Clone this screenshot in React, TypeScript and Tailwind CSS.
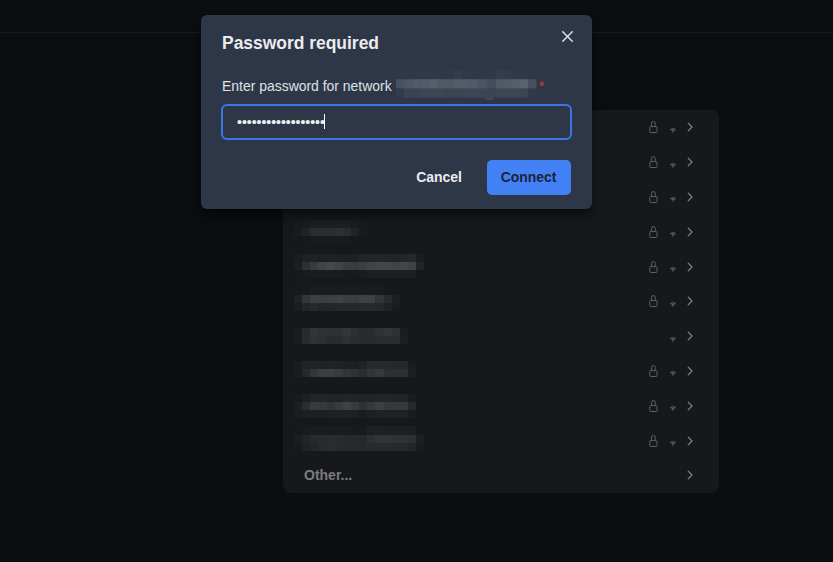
import React from "react";

const CELL = 8.15;

type MosaicProps = { rows: number[][]; tint?: string };

// Redacted text: a grid of square cells; each number is the cell's strength in percent.
function Mosaic({ rows, tint = "bg-[#ffffff]" }: MosaicProps) {
  return (
    <div className="flex flex-col">
      {rows.map((r, i) => (
        <div key={i} className="flex">
          {r.map((v, j) => (
            <div key={j} style={{ width: CELL, height: CELL, opacity: v / 100 }} className={tint} />
          ))}
        </div>
      ))}
    </div>
  );
}

type Network = { pad: string; locked: boolean; rows: number[][] };

const networks: Network[] = [
  { pad: "pt-0", locked: true, rows: [] },
  { pad: "pt-0", locked: true, rows: [] },
  { pad: "pt-0", locked: true, rows: [] },
  {
    pad: "pt-[5.5px]",
    locked: true,
    rows: [
      [1, 2, 3, 3, 3, 3, 3, 2, 1],
      [2, 5, 9, 9, 9, 10, 9, 5, 1],
      [0, 0, 1, 1, 1, 1, 1, 0, 0],
    ],
  },
  {
    pad: "pt-[4.7px]",
    locked: true,
    rows: [
      [2, 4, 4, 3, 4, 3, 3, 3, 5, 6, 6, 5, 5, 6, 7, 2],
      [3, 10, 15, 19, 21, 19, 16, 15, 17, 19, 20, 20, 19, 20, 18, 5],
      [0, 1, 2, 2, 2, 2, 1, 1, 2, 3, 3, 3, 3, 3, 3, 0],
    ],
  },
  {
    pad: "pt-[3px]",
    locked: true,
    rows: [
      [0, 1, 2, 2, 2, 2, 2, 2, 2, 2, 2, 0, 0],
      [4, 12, 17, 17, 17, 18, 16, 16, 18, 18, 12, 8, 3],
      [2, 6, 7, 6, 6, 7, 7, 7, 7, 8, 7, 4, 2],
    ],
  },
  {
    pad: "pt-[9.2px]",
    locked: false,
    rows: [
      [2, 8, 12, 11, 10, 11, 13, 10, 8, 9, 11, 12, 10, 2],
      [2, 8, 11, 10, 8, 9, 11, 9, 8, 8, 9, 9, 9, 3],
    ],
  },
  {
    pad: "pt-[7.4px]",
    locked: true,
    rows: [
      [2, 5, 5, 4, 5, 4, 3, 3, 5, 8, 8, 8, 7, 7, 2],
      [2, 7, 13, 16, 17, 15, 13, 11, 9, 12, 14, 10, 10, 10, 3],
    ],
  },
  {
    pad: "pt-[5.6px]",
    locked: true,
    rows: [
      [1, 3, 6, 6, 5, 5, 6, 5, 5, 5, 6, 6, 5, 5, 2],
      [3, 9, 15, 14, 12, 15, 18, 15, 11, 14, 17, 14, 14, 14, 7],
      [2, 3, 3, 3, 3, 4, 4, 3, 2, 3, 4, 4, 4, 4, 2],
    ],
  },
  {
    pad: "pt-[3.3px]",
    locked: true,
    rows: [
      [0, 1, 2, 2, 2, 2, 2, 1, 1, 3, 4, 3, 3, 3, 3, 0],
      [2, 5, 8, 8, 9, 8, 7, 7, 7, 10, 12, 12, 11, 11, 10, 3],
      [1, 4, 6, 8, 9, 8, 7, 7, 7, 8, 8, 8, 7, 7, 6, 2],
    ],
  },
];

const ssid = [
  [1, 2, 1, 1, 2, 1, 2, 4, 2, 2, 2, 1, 4, 3, 2, 1, 0],
  [15, 19, 21, 22, 24, 20, 20, 22, 22, 21, 18, 13, 20, 21, 23, 25, 15],
  [3, 8, 8, 9, 9, 9, 8, 8, 9, 9, 9, 8, 9, 9, 9, 8, 2],
];

function Lock() {
  return (
    <svg width="9" height="12" viewBox="0 0 9 12" fill="none" stroke="#66676a" strokeWidth="0.9">
      <rect x="0.8" y="5.6" width="7.2" height="5.9" rx="0.9" />
      <path d="M2.6 5.5V2.2Q2.6 0.5 4.4 0.5Q6.2 0.5 6.2 2.2V5.5" />
    </svg>
  );
}

function Wifi() {
  return (
    <svg width="6" height="5" viewBox="0 0 6 5" fill="none" stroke="#77787a" strokeWidth="0.9">
      <path d="M0.3 1.5Q3 -0.1 5.7 1.5" />
      <path d="M1.5 2.7Q3 1.8 4.5 2.7" />
      <circle cx="3" cy="3.9" r="0.7" fill="#77787a" stroke="none" />
    </svg>
  );
}

function Chevron() {
  return (
    <svg width="6" height="10" viewBox="0 0 6 10" fill="none" stroke="#808183" strokeWidth="1.3">
      <path d="M0.9 0.9L5 5L0.9 9.1" />
    </svg>
  );
}

export default function App() {
  return (
    <div className="relative h-[562px] w-[833px] overflow-hidden bg-[#0b0d11] font-['Liberation_Sans',sans-serif]">
      <header className="h-[33px] border-b border-[#181a1e]" />
      <main className="pt-[77px] pl-[283px]">
        <div className="h-[383px] w-[436px] rounded-lg bg-[#16181b]">
          {networks.map((n, i) => (
            <div key={i} className="flex h-[34.8px] justify-between pr-[26px] pl-[11px]">
              <div className={n.pad}>
                <Mosaic rows={n.rows} />
              </div>
              <div className="flex items-center">
                {n.locked && <Lock />}
                <div className="ml-[12px] pt-[6px]">
                  <Wifi />
                </div>
                <div className="ml-[11px]">
                  <Chevron />
                </div>
              </div>
            </div>
          ))}
          <div className="flex h-[34.8px] items-center justify-between pr-[26px] pl-[21px]">
            <span className="scale-y-[1.08] text-[14px] font-bold text-[#7b7c7e]">Other...</span>
            <Chevron />
          </div>
        </div>
      </main>

      <div
        role="dialog"
        className="absolute top-[15.4px] left-[201px] h-[193.6px] w-[390.5px] rounded-md bg-[#2e3747] px-[21px] shadow-[0_9px_14px_-3px_rgba(0,0,0,0.45),0_4px_6px_-2px_rgba(0,0,0,0.3)]"
      >
        <div className="flex h-[40px] justify-between">
          <h2 className="pt-[15.6px] text-[17.45px] leading-[25px] font-bold text-[#ebecee]">
            <span className="inline-block scale-y-[1.06]">Password required</span>
          </h2>
          <svg className="mt-[15.6px] -mr-[2px]" width="11" height="11" viewBox="0 0 11 11" stroke="#e6e7e9" strokeWidth="1.4">
            <path d="M0.3 0.3L10.7 10.7M10.7 0.3L0.3 10.7" />
          </svg>
        </div>
        <label className="mt-[14.6px] flex h-[34px] text-[13.95px] leading-[33px] text-[#dfe1e4]">
          <span className="w-[174px] scale-y-[1.09] whitespace-nowrap">Enter password for network</span>
          <span className="h-[30px] w-[141px] origin-top-left scale-x-[1.018] scale-y-[1.15]">
            <Mosaic rows={ssid} tint="bg-[#e0dfe2]" />
            <span className="ml-[88px] block h-[2px] w-[8px] bg-[#424a58]" />
          </span>
          <span className="ml-[2px] text-[#d04147]">*</span>
        </label>
        <div className="-ml-px flex h-[36px] w-[351px] items-center rounded-md border-2 border-[#3c76e4] pl-[14px]">
          <span className="w-[87px] text-[13.95px] whitespace-nowrap text-[#edeef0] [-webkit-text-stroke:0.15px_#edeef0]">
            ••••••••••••••••••
          </span>
          <span className="h-[15px] w-px bg-white" />
        </div>
        <div className="mt-[20px] flex items-center justify-end text-[13.95px] font-bold">
          <button className="px-[13.5px] text-[#ebecee]">
            <span className="inline-block scale-y-[1.08]">Cancel</span>
          </button>
          <button className="ml-[11px] h-[35px] w-[84px] rounded-[5px] bg-[#4280f6] text-[#1a2538]">
            <span className="inline-block scale-y-[1.08]">Connect</span>
          </button>
        </div>
      </div>
    </div>
  );
}
